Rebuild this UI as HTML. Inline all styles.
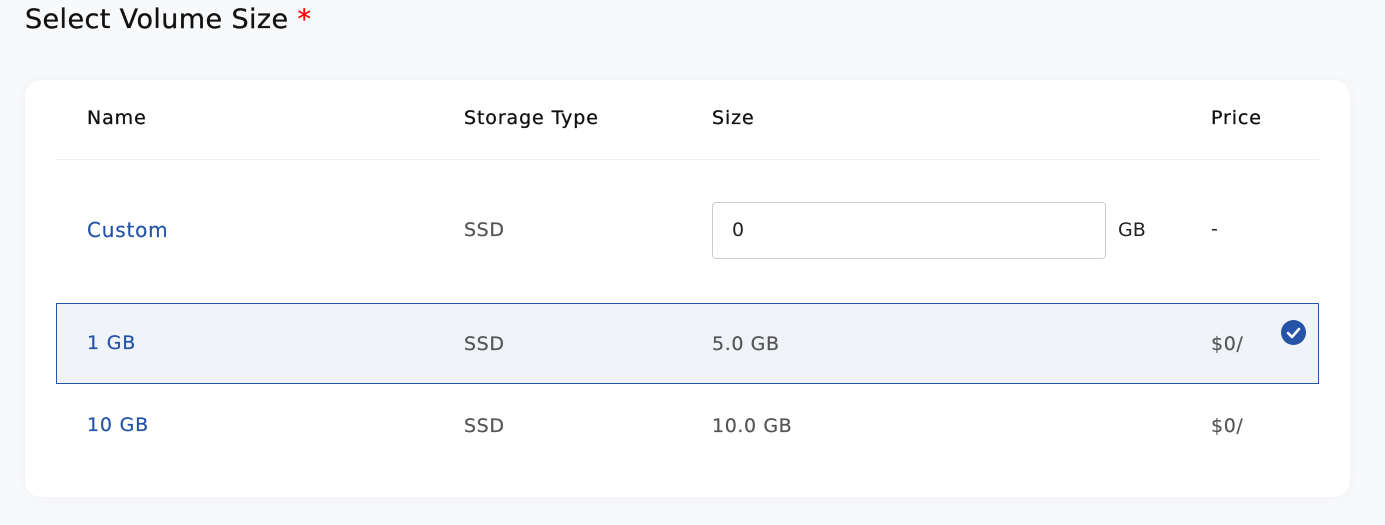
<!DOCTYPE html>
<html><head><style>
body{margin:0;width:1385px;height:525px;background:#f8f9fb;font-family:"DejaVu Sans","Liberation Sans",sans-serif;position:relative;overflow:hidden}
.a{position:absolute;white-space:nowrap}
.card{position:absolute;left:25px;top:80px;width:1325px;height:417px;background:#fff;border-radius:16px;box-shadow:0 0 14px rgba(0,0,0,0.04)}
.h{font-size:19px;color:#111;top:107px;letter-spacing:0.9px;-webkit-text-stroke:0.3px #111}
.blue{color:#2453a8;font-size:20px;letter-spacing:0.8px;-webkit-text-stroke:0.2px #2453a8}
.g{color:#555;font-size:19px;letter-spacing:0.6px;-webkit-text-stroke:0.2px #555}
</style></head><body>
<div class="a" style="left:25px;top:4px;font-size:27px;color:#111;letter-spacing:0.4px;-webkit-text-stroke:0.3px #111">Select Volume Size <span style="color:#f00;-webkit-text-stroke:0.3px #f00">*</span></div>
<div class="card"></div>
<div class="a h" style="left:87px">Name</div>
<div class="a h" style="left:464px">Storage Type</div>
<div class="a h" style="left:712px">Size</div>
<div class="a h" style="left:1211px">Price</div>
<div class="a" style="left:56px;top:159px;width:1263px;height:1px;background:#eef0f3"></div>
<div class="a blue" style="left:87px;top:218px">Custom</div>
<div class="a g" style="left:464px;top:219px">SSD</div>
<div class="a" style="left:712px;top:202px;width:392px;height:55px;border:1px solid #ccc;border-radius:4px;background:#fff"></div>
<div class="a" style="left:732px;top:219px;font-size:19px;color:#222">0</div>
<div class="a" style="left:1118px;top:219px;font-size:19px;color:#222">GB</div>
<div class="a" style="left:1211px;top:218px;font-size:19px;color:#222">-</div>
<div class="a" style="left:56px;top:303px;width:1261px;height:79px;border:1px solid #2453a8;background:#f0f3f8"></div>
<div class="a blue" style="left:87px;top:332px;font-size:19px">1 GB</div>
<div class="a g" style="left:464px;top:333px">SSD</div>
<div class="a g" style="left:712px;top:333px">5.0 GB</div>
<div class="a g" style="left:1211px;top:333px">$0/</div>
<svg class="a" style="left:1281px;top:320px" width="25" height="25" viewBox="0 0 25 25"><circle cx="12.5" cy="12.5" r="12.5" fill="#2453a8"/><path d="M7 13l4 4 7-8" stroke="#fff" stroke-width="2.6" fill="none" stroke-linecap="round" stroke-linejoin="round"/></svg>
<div class="a blue" style="left:87px;top:414px;font-size:19px">10 GB</div>
<div class="a g" style="left:464px;top:415px">SSD</div>
<div class="a g" style="left:712px;top:415px">10.0 GB</div>
<div class="a g" style="left:1211px;top:415px">$0/</div>
</body></html>
